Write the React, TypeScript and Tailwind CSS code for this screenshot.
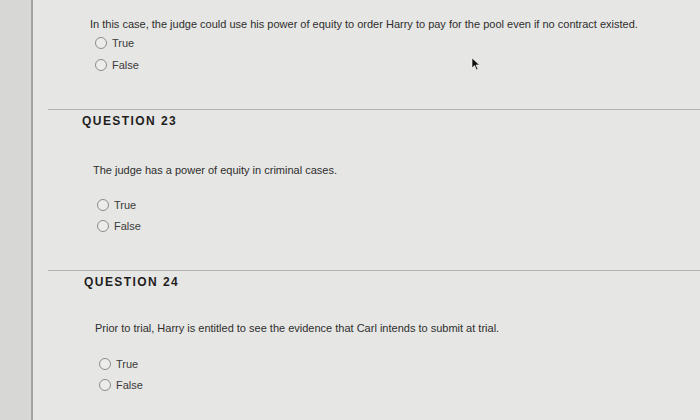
import React from 'react'

const font = { fontFamily: '"Liberation Sans", Arial, sans-serif' }

function Option({ label, x, mt }: { label: string; x: string; mt: string }) {
  return (
    <div className={`flex items-center h-[14px] ${mt} ${x}`}>
      <span className="w-[12px] h-[12px] rounded-full border border-[#8c8c8c] bg-[#ececea] shrink-0" />
      <span className="ml-[5px] text-[11px] text-[#3a3a3a]">{label}</span>
    </div>
  )
}

export default function App() {
  return (
    <div className="relative w-[700px] h-[420px] flex bg-[#e6e6e4] overflow-hidden" style={font}>
      {/* Left strip */}
      <div className="w-[33px] h-full bg-[#d7d7d6] border-r-2 border-[#a3a3a3] shrink-0" />

      {/* Content */}
      <div className="flex-1 flex flex-col">
        <p className="mt-[17px] h-[14px] leading-[14px] ml-[57px] text-[11px] text-[#2e2e2e]">
          In this case, the judge could use his power of equity to order Harry to pay for the pool even if no contract existed.
        </p>
        <Option label="True" x="ml-[62px]" mt="mt-[5px]" />
        <Option label="False" x="ml-[62px]" mt="mt-[8px]" />

        <div className="mt-[37px] ml-[15px] border-t border-[#b4b4b2]" />

        {/* Question 23 */}
        <h2 className="mt-[4px] h-[14px] leading-[14px] ml-[49px] text-[12px] font-bold tracking-[0.12em] text-[#1e1e1e]">
          QUESTION 23
        </h2>
        <p className="mt-[35px] h-[14px] leading-[14px] ml-[60px] text-[11px] text-[#2e2e2e]">
          The judge has a power of equity in criminal cases.
        </p>
        <Option label="True" x="ml-[64px]" mt="mt-[21px]" />
        <Option label="False" x="ml-[64px]" mt="mt-[7px]" />

        <div className="mt-[37px] ml-[15px] border-t border-[#b4b4b2]" />

        {/* Question 24 */}
        <h2 className="mt-[4px] h-[14px] leading-[14px] ml-[51px] text-[12px] font-bold tracking-[0.12em] text-[#1e1e1e]">
          QUESTION 24
        </h2>
        <p className="mt-[32px] h-[14px] leading-[14px] ml-[62px] text-[11px] text-[#2e2e2e]">
          Prior to trial, Harry is entitled to see the evidence that Carl intends to submit at trial.
        </p>
        <Option label="True" x="ml-[66px]" mt="mt-[22px]" />
        <Option label="False" x="ml-[66px]" mt="mt-[7px]" />
      </div>

      {/* Mouse cursor */}
      <svg className="absolute left-[471px] top-[57px]" width="10" height="14" viewBox="0 0 10 14">
        <path d="M1 1 L1 11 L3.5 8.6 L5.5 13 L7 12.3 L5 8 L8.5 8 Z" fill="#111" stroke="#fff" strokeWidth="0.6" />
      </svg>
    </div>
  )
}
